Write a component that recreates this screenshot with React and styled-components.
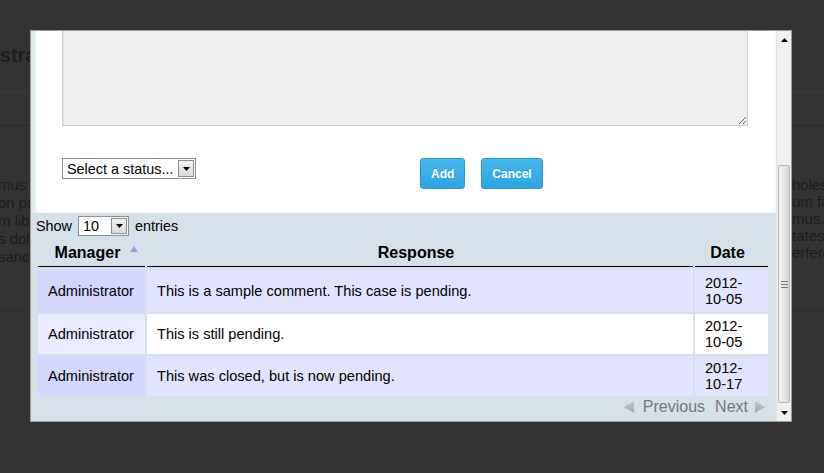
import React from "react";
import styled, { createGlobalStyle } from "styled-components";

const GlobalStyle = createGlobalStyle`
  html, body { margin: 0; padding: 0; background: #333333; }
  body { font-family: "Liberation Sans", Arial, sans-serif; }
  * { box-sizing: border-box; }
`;

const Page = styled.div`
  position: relative;
  width: 824px;
  height: 473px;
  overflow: hidden;
  background: #333333;
  font-family: "Liberation Sans", Arial, sans-serif;
`;

/* ---------- dimmed page behind the dialog ---------- */
const BgHeader = styled.div`
  height: 93px;
  border-bottom: 1px solid #3b3b3b;
`;
const BgTitle = styled.h1`
  margin: 0 0 0 -68px;
  padding-top: 43px;
  font-size: 20px;
  line-height: 24px;
  font-weight: bold;
  color: #1e1e1e;
  white-space: nowrap;
`;
const BgNav = styled.div`
  height: 33px;
  border-bottom: 1px solid #2a2a2a;
`;
const BgContent = styled.div`
  display: flex;
  height: 185px;
  padding-top: 50px;
  border-bottom: 1px solid #2c2c2c;
`;
const BgText = styled.div`
  font-size: 15px;
  line-height: ${(p) => p.$lh}px;
  color: #1c1c1c;
  white-space: nowrap;
  overflow: hidden;
  ${(p) => (p.$right ? "margin-left: auto; width: 32px;" : "width: 300px; margin-left: -2px;")}
`;
const BgLine = styled.div``;

/* ---------- dialog ---------- */
const Dialog = styled.div`
  position: absolute;
  left: 30px;
  top: 30px;
  width: 762px;
  height: 392px;
  border: 1px solid #9c9c9c;
  display: flex;
  background: #d4e1e8;
`;
const Content = styled.div`
  flex: 1;
  min-width: 0;
  display: flex;
  flex-direction: column;
  overflow: hidden;
  background: #d4e1e8;
`;
const TopArea = styled.div`
  padding: 0 2px 0 5px;
  background: linear-gradient(90deg, #d6e6ea 0px, #eaf3f5 5px, #f4f9fa 100%);
`;
const TopPanel = styled.div`
  background: #ffffff;
  border-radius: 0 0 5px 5px;
  padding: 0 26px 24px;
  display: flex;
  flex-direction: column;
`;
const CommentBox = styled.textarea`
  display: block;
  margin-top: -30px;
  width: 686px;
  height: 125px;
  background: #eeeeee;
  border: 1px solid #d2d2d2;
  border-bottom-color: #cacaca;
  box-shadow: inset 1px 1px 2px rgba(0, 0, 0, 0.06);
  resize: both;
  outline: none;
`;
const ControlsRow = styled.div`
  display: flex;
  align-items: flex-start;
  margin-top: 32px;
  height: 31px;
`;
const FakeSelect = styled.div`
  display: inline-flex;
  align-items: center;
  height: ${(p) => p.$h}px;
  width: ${(p) => p.$w}px;
  border: 1px solid #8f8f8f;
  background: #ffffff;
  font-size: 14.4px;
  color: #000;
  padding-left: 4px;
  padding-right: 1px;
`;
const SelectText = styled.span`
  flex: 1;
  white-space: nowrap;
  overflow: hidden;
`;
const SelectArrow = styled.span`
  width: 16px;
  height: ${(p) => p.$h}px;
  border: 1px solid #8c8c8c;
  background: linear-gradient(180deg, #f3f3f3, #dcdcdc);
  display: flex;
  align-items: center;
  justify-content: center;
`;
const ButtonGroup = styled.div`
  display: flex;
  gap: 16px;
  margin-left: 224px;
`;
const BlueButton = styled.button`
  height: 31px;
  padding: 0 ${(p) => p.$px}px;
  border: 1px solid #2a98d6;
  border-radius: 3px;
  background: linear-gradient(180deg, #45baf0 0%, #2ea3e0 100%);
  color: #ffffff;
  font-family: "Liberation Sans", Arial, sans-serif;
  font-size: 12px;
  font-weight: bold;
  text-shadow: 0 -1px 0 rgba(0, 0, 0, 0.15);
  cursor: pointer;
`;

const Lower = styled.div`
  flex: 1;
  padding: 0 6px 0 5px;
  display: flex;
  flex-direction: column;
`;
const ShowRow = styled.div`
  height: 25px;
  padding-top: 3px;
  display: flex;
  align-items: flex-start;
  font-size: 14.4px;
  color: #000;
`;
const ShowLabel = styled.span`
  line-height: 20px;
  margin: ${(p) => p.$m};
`;

const Table = styled.table`
  width: 734px;
  table-layout: fixed;
  border-collapse: separate;
  border-spacing: 2px;
  font-size: 14.6px;
  color: #000;
`;
const Th = styled.th`
  width: ${(p) => p.$w}px;
  padding: 3px 18px 4px 10px;
  font-size: 16px;
  line-height: 19px;
  font-weight: bold;
  text-align: center;
  border-bottom: 1px solid #000;
  position: relative;
`;
const SortIcon = styled.svg`
  position: absolute;
  right: 7px;
  top: 6px;
`;
const Tr = styled.tr`
  background: ${(p) => (p.$odd ? "#e2e4ff" : "#ffffff")};
`;
const Td = styled.td`
  padding: ${(p) => (p.$first ? "6px 10px 5px" : "4px 10px")};
  line-height: 16px;
  vertical-align: middle;
  background: ${(p) => (p.$sorted ? (p.$odd ? "#d3d6ff" : "#eaebff") : "transparent")};
`;

const Pager = styled.div`
  display: flex;
  justify-content: flex-end;
  align-items: center;
  height: 19px;
  margin-top: -1px;
  padding-right: 4px;
  font-size: 16px;
  color: #787878;
`;
const PageLink = styled.span`
  display: inline-flex;
  align-items: center;
  gap: ${(p) => p.$gap}px;
  margin-left: ${(p) => p.$ml}px;
`;

/* ---------- scrollbar ---------- */
const Scrollbar = styled.div`
  width: 15px;
  display: flex;
  flex-direction: column;
  background: #f0f0f0;
  border-left: 1px solid #e2e2e2;
`;
const ScrollBtn = styled.div`
  height: 17px;
  display: flex;
  align-items: center;
  justify-content: center;
`;
const Track = styled.div`
  flex: 1;
  padding-top: 117px;
  padding-left: 1px;
  padding-right: 1px;
`;
const Thumb = styled.div`
  height: 238px;
  border: 1px solid #b8b8b8;
  border-radius: 2px;
  background: linear-gradient(90deg, #f4f4f4 0%, #e4e4e4 50%, #d6d6d6 100%);
  display: flex;
  align-items: center;
  justify-content: center;
`;

const Tri = ({ dir, size = 7, color = "#000" }) => {
  const h = Math.round(size * 0.6);
  const pts =
    dir === "up"
      ? `0,${h} ${size / 2},0 ${size},${h}`
      : `0,0 ${size},0 ${size / 2},${h}`;
  return (
    <svg width={size} height={h} viewBox={`0 0 ${size} ${h}`}>
      <polygon points={pts} fill={color} />
    </svg>
  );
};

const PageArrow = ({ left }) => (
  <svg width="12" height="14" viewBox="0 0 12 14">
    <defs>
      <linearGradient id={left ? "pa" : "pb"} x1="0" y1="0" x2="0" y2="1">
        <stop offset="0" stopColor="#c4c4c4" />
        <stop offset="1" stopColor="#a6a6a6" />
      </linearGradient>
    </defs>
    <polygon
      points={left ? "11,1 11,13 1,7" : "1,1 1,13 11,7"}
      fill={`url(#${left ? "pa" : "pb"})`}
    />
  </svg>
);

const rows = [
  { who: "Administrator", text: "This is a sample comment. This case is pending.", date: "2012-10-05" },
  { who: "Administrator", text: "This is still pending.", date: "2012-10-05" },
  { who: "Administrator", text: "This was closed, but is now pending.", date: "2012-10-17" },
];

export default function App() {
  return (
    <Page>
      <GlobalStyle />
      <BgHeader>
        <BgTitle>Administration</BgTitle>
      </BgHeader>
      <BgNav />
      <BgContent>
        <BgText $lh={18}>
          <BgLine>mus voluptatum deleniti atque</BgLine>
          <BgLine>on provident, similique sunt</BgLine>
          <BgLine>m libero tempore, cum soluta</BgLine>
          <BgLine>s dolor repellendus temporibus</BgLine>
          <BgLine>sanctus est qui dolorem</BgLine>
        </BgText>
        <BgText $right $lh={17}>
          <BgLine>holestiae</BgLine>
          <BgLine>um facilis</BgLine>
          <BgLine>mus. omnis</BgLine>
          <BgLine>tates repud</BgLine>
          <BgLine>erferendis</BgLine>
        </BgText>
      </BgContent>

      <Dialog>
        <Content>
          <TopArea>
            <TopPanel>
              <CommentBox readOnly defaultValue="" />
              <ControlsRow>
                <FakeSelect $w={134} $h={21}>
                  <SelectText>Select a status...</SelectText>
                  <SelectArrow $h={17}>
                    <Tri dir="down" size={7} />
                  </SelectArrow>
                </FakeSelect>
                <ButtonGroup>
                  <BlueButton $px={10}>Add</BlueButton>
                  <BlueButton $px={10}>Cancel</BlueButton>
                </ButtonGroup>
              </ControlsRow>
            </TopPanel>
          </TopArea>

          <Lower>
            <ShowRow>
              <ShowLabel $m="0 6px 0 0">Show</ShowLabel>
              <FakeSelect $w={51} $h={20}>
                <SelectText>10</SelectText>
                <SelectArrow $h={16}>
                  <Tri dir="down" size={7} />
                </SelectArrow>
              </FakeSelect>
              <ShowLabel $m="0 0 0 6px">entries</ShowLabel>
            </ShowRow>

            <Table>
              <thead>
                <tr>
                  <Th $w={107}>
                    Manager
                    <SortIcon width="8" height="6" viewBox="0 0 8 6">
                      <polygon points="0,6 4,0 8,6" fill="#9d9fdc" />
                    </SortIcon>
                  </Th>
                  <Th $w={546}>Response</Th>
                  <Th $w={73}>Date</Th>
                </tr>
              </thead>
              <tbody>
                {rows.map((r, i) => (
                  <Tr key={i} $odd={i % 2 === 0}>
                    <Td $first={i === 0} $sorted $odd={i % 2 === 0}>{r.who}</Td>
                    <Td $first={i === 0}>{r.text}</Td>
                    <Td $first={i === 0}>{r.date}</Td>
                  </Tr>
                ))}
              </tbody>
            </Table>

            <Pager>
              <PageLink $gap={8} $ml={0}>
                <PageArrow left />
                Previous
              </PageLink>
              <PageLink $gap={6} $ml={10}>
                Next
                <PageArrow />
              </PageLink>
            </Pager>
          </Lower>
        </Content>
        <Scrollbar>
          <ScrollBtn>
            <Tri dir="up" size={7} />
          </ScrollBtn>
          <Track>
            <Thumb>
              <svg width="7" height="7" viewBox="0 0 7 7">
                <rect x="0" y="0" width="7" height="1" fill="#7a7a7a" />
                <rect x="0" y="3" width="7" height="1" fill="#7a7a7a" />
                <rect x="0" y="6" width="7" height="1" fill="#7a7a7a" />
              </svg>
            </Thumb>
          </Track>
          <ScrollBtn>
            <Tri dir="down" size={7} />
          </ScrollBtn>
        </Scrollbar>
      </Dialog>
    </Page>
  );
}
